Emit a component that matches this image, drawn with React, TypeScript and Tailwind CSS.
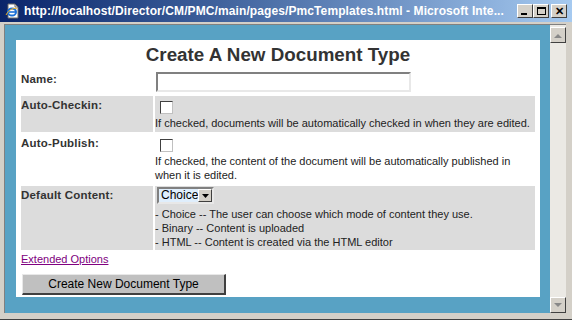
import { useState } from 'react'

// 3D borders like the classic windows controls
const raised = 'border border-t-white border-l-white border-r-[#404040] border-b-[#404040]'
const inset = 'border-2 border-t-[#808080] border-l-[#808080] border-r-[#e8e8e8] border-b-[#e8e8e8]'

function TitleButton({ children }: { children: React.ReactNode }) {
  return (
    <div className={`w-[16px] h-[14px] bg-[#d4d0c8] flex items-center justify-center ${raised}`}>
      {children}
    </div>
  )
}

function IeIcon() {
  return (
    <svg width="16" height="16" viewBox="0 0 16 16">
      <path d="M3 1h7l3 3v11H3z" fill="#fff" stroke="#6b6b6b" strokeWidth="1" />
      <path d="M10 1v3h3" fill="none" stroke="#6b6b6b" strokeWidth="1" />
      <ellipse cx="7" cy="9" rx="4" ry="3.6" fill="none" stroke="#1b6fd6" strokeWidth="2" />
      <path d="M3.5 9h7" stroke="#1b6fd6" strokeWidth="1.6" />
      <path d="M1 12c3-6 9-8 11-6" fill="none" stroke="#f2b01e" strokeWidth="1" />
    </svg>
  )
}

function ScrollArrow({ up }: { up?: boolean }) {
  return (
    <div className={`w-[16px] h-[16px] bg-[#d4d0c8] flex items-center justify-center ${raised}`}>
      <svg width="8" height="5" viewBox="0 0 8 5">
        {up ? <path d="M0 5L4 1L8 5z" fill="#888" /> : <path d="M0 0L4 4L8 0z" fill="#888" />}
      </svg>
    </div>
  )
}

function CheckBox() {
  const [on, setOn] = useState(false)
  return (
    <div
      onClick={() => setOn(!on)}
      className="w-[13px] h-[13px] bg-white border border-t-[#404040] border-l-[#404040] border-r-[#c0c0c0] border-b-[#c0c0c0] flex items-center justify-center"
    >
      {on && <span className="text-[10px] leading-none">✓</span>}
    </div>
  )
}

export default function App() {
  return (
    <div className="w-[572px] h-[320px] bg-[#d4d0c8] flex flex-col overflow-hidden font-['Liberation_Sans',Arial,sans-serif] border-b border-b-[#404040]">
      {/* Title bar */}
      <div className="h-[22px] shrink-0 flex items-center pl-[5px] pr-[5px] bg-gradient-to-r from-[#0a246a] to-[#a6caf0]">
        <IeIcon />
        <span className="ml-[3px] text-white font-bold text-[12px] tracking-[0.1px] whitespace-nowrap flex-1">
          http://localhost/Director/CM/PMC/main/pages/PmcTemplates.html - Microsoft Inte...
        </span>
        <div className="flex items-center">
          <TitleButton>
            <div className="w-[6px] h-[2px] bg-black mt-[6px] -ml-[2px]" />
          </TitleButton>
          <TitleButton>
            <div className="w-[9px] h-[8px] border border-black border-t-2" />
          </TitleButton>
          <div className="ml-[2px]">
            <TitleButton>
              <span className="text-[11px] font-bold leading-none text-black">✕</span>
            </TitleButton>
          </div>
        </div>
      </div>

      {/* Window body */}
      <div className="flex-1 flex mt-[2px] ml-[4px] mr-[6px] mb-[6px] border-l border-t border-[#808080]">
        <div className="flex-1 bg-[#58a2c4] pt-[15px] pb-[16px] pl-[11px] pr-[10px]">
          <div className="bg-white h-full text-[#222]">
            <div className="h-[30px] pt-[4px] text-center font-bold text-[18.8px] leading-[22px] text-[#333]">
              Create A New Document Type
            </div>

            <div className="grid grid-cols-[132px_1fr] gap-[2px] px-[5px] text-[11px] leading-[14px]">
              {/* Name */}
              <div className="font-bold text-[11.5px] tracking-[0.2px] text-[#333] pt-[2px]">Name:</div>
              <div className="pt-[2px] pb-[2px] pl-[1px]">
                <input className={`block w-[255px] h-[20px] bg-white outline-none ${inset}`} />
              </div>

              {/* Auto-Checkin */}
              <div className="font-bold text-[11.5px] tracking-[0.2px] text-[#333] bg-[#dcdcdc] pt-[2px]">Auto-Checkin:</div>
              <div className="bg-[#dcdcdc] pt-[5px] pb-[2px]">
                <div className="ml-[5px] mb-[2px]">
                  <CheckBox />
                </div>
                If checked, documents will be automatically checked in when they are edited.
              </div>

              {/* Auto-Publish */}
              <div className="font-bold text-[11.5px] tracking-[0.2px] text-[#333] pt-[2px]">Auto-Publish:</div>
              <div className="pt-[5px] pb-[2px]">
                <div className="ml-[5px] mb-[2px]">
                  <CheckBox />
                </div>
                If checked, the content of the document will be automatically published in
                <br />
                when it is edited.
              </div>

              {/* Default Content */}
              <div className="font-bold text-[11.5px] tracking-[0.2px] text-[#333] bg-[#dcdcdc] pt-[2px]">Default Content:</div>
              <div className="bg-[#dcdcdc] pt-[1px] pb-[1px]">
                <div className={`ml-[2px] mb-[3px] w-[57px] h-[17px] flex bg-white ${inset} border-t-[#404040] border-l-[#404040]`}>
                  <span className="flex-1 bg-[#dfeefc] text-[12px] leading-[13px] pl-[2px] text-black">Choice</span>
                  <div className={`w-[15px] bg-[#d4d0c8] flex items-center justify-center ${raised}`}>
                    <svg width="7" height="4" viewBox="0 0 7 4">
                      <path d="M0 0L3.5 4L7 0z" fill="#000" />
                    </svg>
                  </div>
                </div>
                <div>- Choice -- The user can choose which mode of content they use.</div>
                <div>- Binary -- Content is uploaded</div>
                <div>- HTML -- Content is created via the HTML editor</div>
              </div>
            </div>

            <div className="px-[5px] pt-[2px] text-[11px] leading-[14px]">
              <a href="#" className="text-[#800080] underline">Extended Options</a>
            </div>
            <div className="px-[6px] pt-[5px]">
              <button
                type="button"
                className="w-[204px] h-[21px] bg-[#c0c0c0] text-[12px] text-black border border-t-[#e8e8e8] border-l-[#e8e8e8] border-r-[#404040] border-b-[#404040] border-b-2 border-r-2"
              >
                Create New Document Type
              </button>
            </div>
          </div>
        </div>

        {/* Scrollbar */}
        <div className="w-[16px] flex flex-col bg-[#ebe9e4]">
          <div className="mt-[2px]">
            <ScrollArrow up />
          </div>
          <div className="flex-1" />
          <ScrollArrow />
        </div>
      </div>
    </div>
  )
}
